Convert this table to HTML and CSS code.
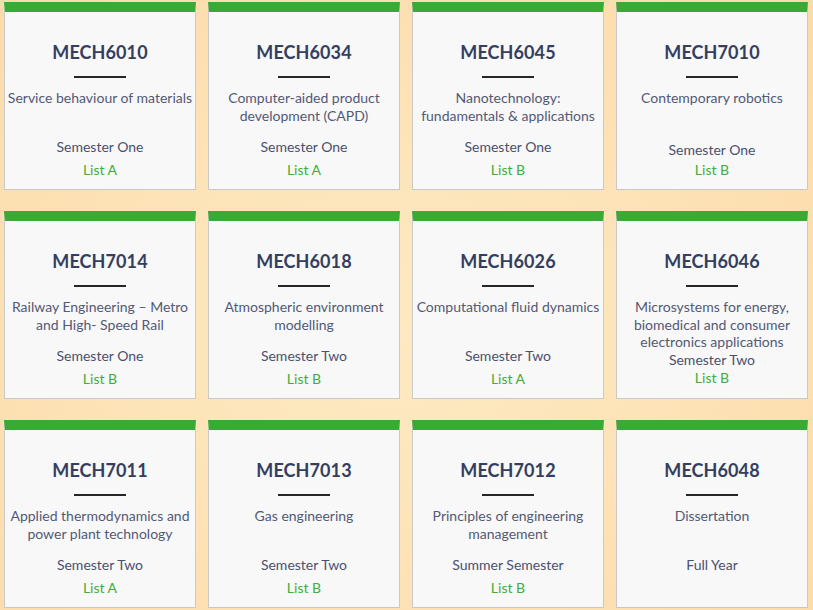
FILE: index.html
```html
<!DOCTYPE html>
<html lang="en">
<head>
<meta charset="utf-8">
<title>Courses</title>
<link rel="stylesheet" href="styles.css">
</head>
<body>
<main class="grid">
  <article class="card">
    <h2 class="code">MECH6010</h2>
    <p class="desc">Service behaviour of materials</p>
    <p class="sem">Semester One</p>
    <p class="list">List A</p>
  </article>
  <article class="card">
    <h2 class="code">MECH6034</h2>
    <p class="desc">Computer-aided product<br>development (CAPD)</p>
    <p class="sem">Semester One</p>
    <p class="list">List A</p>
  </article>
  <article class="card">
    <h2 class="code">MECH6045</h2>
    <p class="desc">Nanotechnology:<br>fundamentals &amp; applications</p>
    <p class="sem">Semester One</p>
    <p class="list">List B</p>
  </article>
  <article class="card card--alt">
    <h2 class="code">MECH7010</h2>
    <p class="desc">Contemporary robotics</p>
    <p class="sem">Semester One</p>
    <p class="list">List B</p>
  </article>

  <article class="card">
    <h2 class="code">MECH7014</h2>
    <p class="desc">Railway Engineering – Metro<br>and High- Speed Rail</p>
    <p class="sem">Semester One</p>
    <p class="list">List B</p>
  </article>
  <article class="card">
    <h2 class="code">MECH6018</h2>
    <p class="desc">Atmospheric environment<br>modelling</p>
    <p class="sem">Semester Two</p>
    <p class="list">List B</p>
  </article>
  <article class="card">
    <h2 class="code">MECH6026</h2>
    <p class="desc">Computational fluid dynamics</p>
    <p class="sem">Semester Two</p>
    <p class="list">List A</p>
  </article>
  <article class="card card--tight">
    <h2 class="code">MECH6046</h2>
    <p class="desc">Microsystems for energy,<br>biomedical and consumer<br>electronics applications</p>
    <p class="sem">Semester Two</p>
    <p class="list">List B</p>
  </article>

  <article class="card">
    <h2 class="code">MECH7011</h2>
    <p class="desc">Applied thermodynamics and<br>power plant technology</p>
    <p class="sem">Semester Two</p>
    <p class="list">List A</p>
  </article>
  <article class="card">
    <h2 class="code">MECH7013</h2>
    <p class="desc">Gas engineering</p>
    <p class="sem">Semester Two</p>
    <p class="list">List B</p>
  </article>
  <article class="card">
    <h2 class="code">MECH7012</h2>
    <p class="desc">Principles of engineering<br>management</p>
    <p class="sem">Summer Semester</p>
    <p class="list">List B</p>
  </article>
  <article class="card">
    <h2 class="code">MECH6048</h2>
    <p class="desc">Dissertation</p>
    <p class="sem">Full Year</p>
  </article>
</main>
</body>
</html>
```
FILE: styles.css
```css
* { box-sizing: border-box; }

html, body {
  margin: 0;
  padding: 0;
  height: 100%;
}

body {
  font-family: Lato, "Open Sans", "Liberation Sans", sans-serif;
  background: radial-gradient(ellipse 70% 75% at 48% 55%, #fdeac2 0%, #fde3b7 50%, #fcdbaa 100%);
  overflow: hidden;
}

.grid {
  display: grid;
  grid-template-columns: repeat(4, 192px);
  grid-auto-rows: 188px;
  column-gap: 12px;
  row-gap: 21px;
  padding: 2px 0 0 4px;
}

.card {
  background: #f8f8f8;
  border: 1px solid #c9c9c9;
  border-top: 10px solid #3ba935;
  padding-top: 28px;
  text-align: center;
  display: flex;
  flex-direction: column;
  align-items: center;
}

.code {
  margin: 0;
  font-size: 18px;
  line-height: 24px;
  font-weight: 700;
  color: #343e60;
  letter-spacing: 0.1px;
}

.code::after {
  content: "";
  display: block;
  width: 52px;
  height: 2px;
  margin: 12px auto 0;
  background: #262626;
}

.desc {
  margin: 11px 0 0;
  min-height: 49px;
  font-size: 14px;
  line-height: 17.5px;
  color: #535976;
}

.sem {
  margin: 0;
  font-size: 14px;
  line-height: 18px;
  color: #4a506e;
}

.list {
  margin: 5px 0 0;
  font-size: 14px;
  line-height: 18px;
  color: #3fae3a;
}

.card--alt .sem { margin-top: 3px; }
.card--alt .list { margin-top: 2px; }

.card--tight .list { margin-top: 0; }
```
